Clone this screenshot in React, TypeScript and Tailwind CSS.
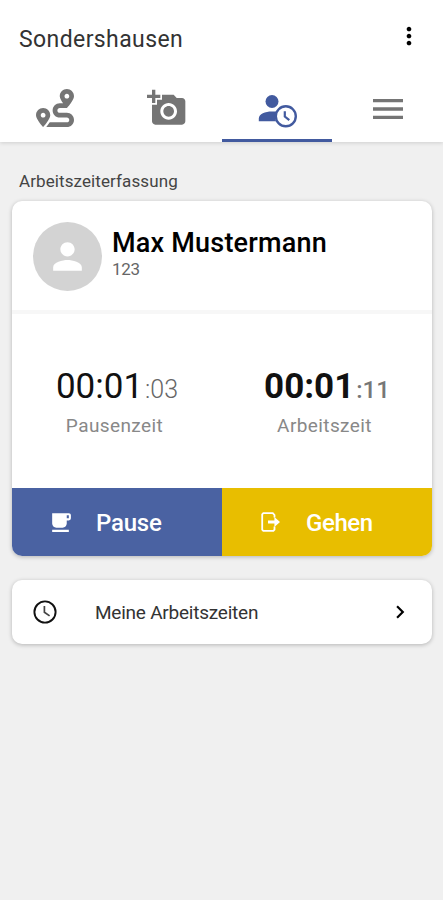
import type { ReactNode } from "react";
import { useState } from "react";
import { FaRoute } from "react-icons/fa";
import {
  MdAddAPhoto,
  MdChevronRight,
  MdLocalCafe,
  MdMenu,
  MdMoreVert,
  MdPerson,
} from "react-icons/md";

type Tab = {
  id: string;
  icon: ReactNode;
};

function PersonClockIcon() {
  return (
    <svg width="40" height="36" viewBox="0 0 40 36" fill="none" className="mt-1.5 ml-0.5">
      <circle cx="14" cy="8.5" r="6.5" fill="currentColor" />
      <path
        d="M0.8 28.2v-2.6c0-4.4 6.5-7 13-7h5.2c-2.2 3-2.6 6-1 9.6z"
        fill="currentColor"
      />
      <circle cx="27.8" cy="23.3" r="10" fill="white" stroke="currentColor" strokeWidth="2.4" />
      <path d="M26.8 18.3v5.2l4.5 3.6" stroke="currentColor" strokeWidth="2.2" />
    </svg>
  );
}

function ExitIcon() {
  return (
    <svg width="20" height="20" viewBox="0 0 20 20" fill="none" className="-mt-0.5 ml-px">
      <path
        d="M13.5 5.6V3L11.8 1.2H2.3L1.2 2.3v15.4l1.1 1.1h10.1l1.1-1.1v-3.3"
        stroke="currentColor"
        strokeWidth="1.8"
      />
      <path d="M7 8.4h6.4V5l5.6 5-5.6 5v-3.4H7z" fill="currentColor" />
    </svg>
  );
}

function ClockIcon() {
  return (
    <svg width="24" height="24" viewBox="0 0 24 24" fill="none">
      <circle cx="12" cy="12" r="10.6" stroke="#111" strokeWidth="1.9" />
      <path d="M11.4 6v6.3l5.2 3.6" stroke="#444" strokeWidth="1.7" />
    </svg>
  );
}

const tabs: Tab[] = [
  { id: "route", icon: <FaRoute size={38} /> },
  { id: "foto", icon: <MdAddAPhoto size={40} className="ml-0.5" /> },
  { id: "zeit", icon: <PersonClockIcon /> },
  { id: "menu", icon: <MdMenu size={40} className="mt-0.5" /> },
];

type ZeitProps = {
  zeit: string;
  sekunden: string;
  label: string;
  bold?: boolean;
};

function Zeit({ zeit, sekunden, label, bold }: ZeitProps) {
  return (
    <div className="flex flex-1 flex-col items-center">
      <div className="flex items-baseline leading-10">
        <span
          className={
            bold
              ? "text-[35px] font-bold text-[#111]"
              : "text-[35px] text-[#111]"
          }
        >
          {zeit}
        </span>
        <span
          className={
            bold
              ? "ml-0.5 text-[24px] font-medium text-[#777]"
              : "ml-0.5 text-[25px] font-light text-[#666]"
          }
        >
          {sekunden}
        </span>
      </div>
      <div className="mt-1 pr-[5px] text-[19px] leading-6 tracking-[0.4px] text-[#888]">{label}</div>
    </div>
  );
}

export default function App() {
  const [aktiv, setAktiv] = useState("zeit");

  return (
    <div className="min-h-screen bg-[#f0f0f0] font-['Roboto',sans-serif] text-[#222]">
      <header className="h-[142px] bg-white shadow-[0_1px_4px_rgba(0,0,0,0.14)]">
        <div className="flex h-[76px] items-center justify-between pr-5 pl-[19px]">
          <h1 className="mt-1 text-[23px] tracking-[0.4px] text-[#333]">Sondershausen</h1>
          <MdMoreVert size={28} className="-mt-1 text-black" />
        </div>
        <nav className="grid h-[66px] grid-cols-4">
          {tabs.map((tab) => (
            <button
              key={tab.id}
              onClick={() => setAktiv(tab.id)}
              className={
                aktiv === tab.id
                  ? "flex items-center justify-center border-b-[3px] border-[#425a9f] text-[#425a9f]"
                  : "flex items-center justify-center border-b-[3px] border-transparent text-[#757575]"
              }
            >
              {tab.icon}
            </button>
          ))}
        </nav>
      </header>

      <main className="pr-[11px] pl-3">
        <h2 className="pt-[27px] pl-[7px] text-[17px] leading-6 tracking-[0.1px] text-[#444]">
          Arbeitszeiterfassung
        </h2>

        <section className="mt-2 overflow-hidden rounded-[10px] bg-white shadow-[0_1px_4px_rgba(0,0,0,0.25)]">
          {/* Mitarbeiter */}
          <div className="flex h-[113px] items-center border-b-4 border-[#f7f7f7] pl-[21px]">
            <div className="mt-px flex size-[69px] items-center justify-center rounded-full bg-[#d3d3d3] text-white">
              <MdPerson size={43} />
            </div>
            <div className="-mt-1 ml-2.5">
              <div className="text-[27px] leading-8 font-medium tracking-[0.2px] text-black">
                Max Mustermann
              </div>
              <div className="-mt-0.5 text-[17px] leading-6 tracking-[-0.3px] text-[#666]">123</div>
            </div>
          </div>

          {/* Zeiten */}
          <div className="flex h-[174px] pt-[53px]">
            <Zeit zeit="00:01" sekunden=":03" label="Pausenzeit" />
            <Zeit zeit="00:01" sekunden=":11" label="Arbeitszeit" bold />
          </div>

          <div className="grid h-[68px] grid-cols-2 text-[24px] font-medium text-white">
            <button className="flex items-center bg-[#4a62a2] pt-0.5 pl-[37px]">
              <MdLocalCafe size={25} className="-mt-0.5 -ml-px" />
              <span className="ml-[23px] tracking-[-0.2px]">Pause</span>
            </button>
            <button className="flex items-center bg-[#e8be00] pt-0.5 pl-[38px]">
              <ExitIcon />
              <span className="ml-[25px] tracking-[-0.4px]">Gehen</span>
            </button>
          </div>
        </section>

        <button className="mt-6 flex h-16 w-full items-center rounded-[10px] bg-white px-[19px] pt-0.5 shadow-[0_1px_4px_rgba(0,0,0,0.25)]">
          <span className="-mt-0.5 flex w-7 justify-center">
            <ClockIcon />
          </span>
          <span className="ml-9 text-[19px] tracking-[-0.23px] text-[#333]">
            Meine Arbeitszeiten
          </span>
          <MdChevronRight size={26} className="-mt-0.5 ml-auto text-black" />
        </button>
      </main>
    </div>
  );
}
